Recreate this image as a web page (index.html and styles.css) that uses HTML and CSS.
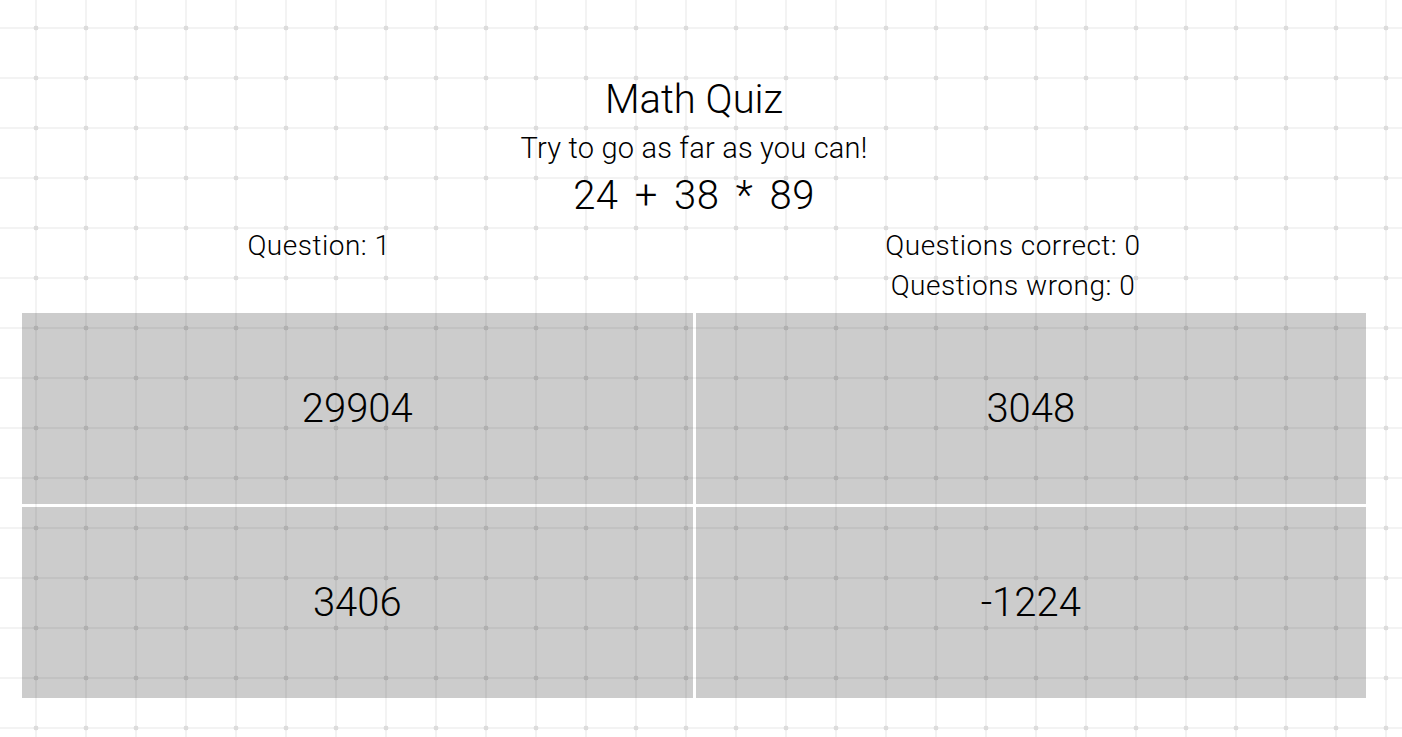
FILE: index.html
```html
<!DOCTYPE html>
<html lang="en">
<head>
<meta charset="utf-8">
<title>Math Quiz</title>
<link rel="stylesheet" href="styles.css">
</head>
<body>
<div class="page">
  <h1 class="title">Math Quiz</h1>
  <p class="subtitle">Try to go as far as you can!</p>
  <p class="equation">24 + 38 * 89</p>
  <div class="stats">
    <div class="stat-col">
      <div class="stat">Question: 1</div>
    </div>
    <div class="stat-col">
      <div class="stat">Questions correct: 0</div>
      <div class="stat">Questions wrong: 0</div>
    </div>
  </div>
  <div class="answers">
    <button class="answer">29904</button>
    <button class="answer">3048</button>
    <button class="answer">3406</button>
    <button class="answer">-1224</button>
  </div>
</div>
</body>
</html>
```
FILE: styles.css
```css
html, body {
  margin: 0;
  padding: 0;
}
body {
  height: 737px;
  overflow: hidden;
  background-color: #ffffff;
  background-image:
    radial-gradient(circle at 25px 25px, #dcdcdc 0 2.1px, transparent 2.7px),
    linear-gradient(to right, #f3f3f3 0 2px, transparent 2px),
    linear-gradient(to bottom, #f3f3f3 0 2px, transparent 2px);
  background-size: 50px 50px, 50px 50px, 50px 50px;
  background-position: 11px 3px, 35px 0, 0 27px;
  font-family: Roboto, "Liberation Sans", sans-serif;
  font-weight: 300;
  color: #000;
}
.page {
  width: 1388px;
  padding-top: 74px;
}
.title {
  margin: 0;
  font-size: 40px;
  font-weight: 300;
  line-height: 51px;
  text-align: center;
}
.subtitle {
  margin: 0;
  font-size: 29px;
  line-height: 46px;
  letter-spacing: 0.2px;
  text-align: center;
}
.equation {
  margin: 0;
  font-size: 40px;
  line-height: 50px;
  word-spacing: 6px;
  letter-spacing: 0.5px;
  text-align: center;
}
.stats {
  margin-top: 5px;
  display: flex;
  justify-content: space-around;
}
.stat-col {
  display: flex;
  flex-direction: column;
  align-items: center;
}
.stat {
  font-size: 28px;
  line-height: 40px;
  letter-spacing: 0.5px;
}
.answers {
  margin: 7px 22px 0;
  display: grid;
  grid-template-columns: 1fr 1fr;
  grid-auto-rows: 191px;
  gap: 3px;
}
.answer {
  border: 0;
  margin: 0;
  padding: 0;
  background: rgba(0, 0, 0, 0.2);
  font-family: inherit;
  font-weight: 300;
  font-size: 40px;
  color: #000;
  display: flex;
  align-items: center;
  justify-content: center;
}
```
